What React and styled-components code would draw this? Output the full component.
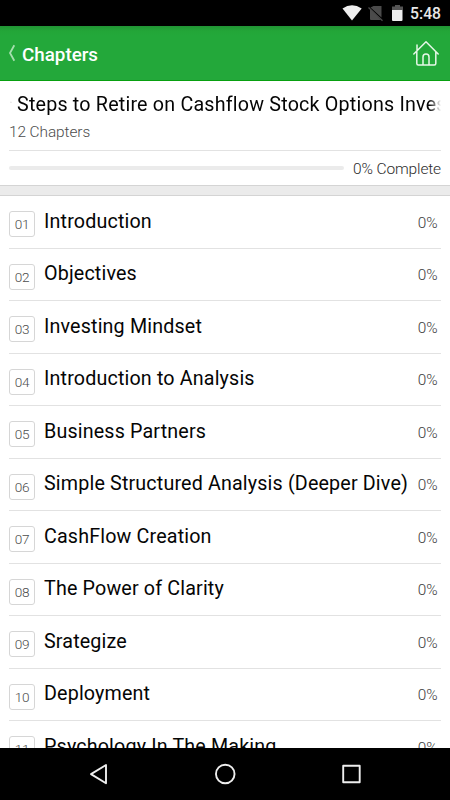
import React from "react";
import styled, { createGlobalStyle } from "styled-components";

const GlobalStyle = createGlobalStyle`
  * { box-sizing: border-box; }
  body { margin: 0; background: #fff; font-family: Roboto, "Liberation Sans", sans-serif; }
`;

const Screen = styled.div`
  width: 450px;
  height: 800px;
  display: flex;
  flex-direction: column;
  overflow: hidden;
  background: #fff;
  color: #050505;
`;

const StatusBar = styled.div`
  flex: none;
  height: 26px;
  display: flex;
  align-items: center;
  justify-content: flex-end;
  padding-right: 9px;
  background: #000;
`;

const StatusIcons = styled.svg`
  width: 66px;
  height: 26px;
  margin-right: 5px;
`;

const Clock = styled.span`
  font-size: 15.7px;
  font-weight: 500;
  line-height: 26px;
  padding-top: 1px;
  color: #e8e8e8;
`;

const Header = styled.header`
  flex: none;
  height: 55px;
  display: flex;
  align-items: center;
  padding: 0 10px 0 8px;
  background: linear-gradient(#219334, #23a638 5px, #23a83a 10px);
  border-bottom: 1px solid #08a010;
`;

const BackIcon = styled.svg`
  width: 8px;
  height: 18px;
  margin-right: 6px;
`;

const HeaderTitle = styled.h1`
  flex: 1;
  margin: 3px 0 0;
  font-size: 18.8px;
  font-weight: 500;
  line-height: 24px;
  color: #fff;
`;

const HomeIcon = styled.svg`
  width: 30px;
  height: 30px;
`;

const Summary = styled.section`
  flex: none;
  height: 104px;
  padding: 0 9px;
`;

const Marquee = styled.div`
  height: 36px;
  padding-top: 12px;
  display: flex;
  overflow: hidden;
  white-space: nowrap;
  font-size: 19.7px;
  line-height: 24px;
  letter-spacing: 0.2px;
  mask-image: linear-gradient(90deg, transparent, #000 9px, #000 420px, transparent);
`;

const MarqueeLead = styled.span`
  flex: none;
  width: 8px;
  font-size: 14px;
  line-height: 20px;
  color: #777;
`;

const ChapterCount = styled.div`
  height: 34px;
  padding-top: 5px;
  font-size: 15.4px;
  font-weight: 300;
  line-height: 20px;
  letter-spacing: -0.07px;
  color: #4c4c4c;
  border-bottom: 1px solid #e2e2e2;
`;

const Progress = styled.div`
  height: 34px;
  display: flex;
  align-items: center;
  gap: 9px;
`;

const Track = styled.div`
  flex: 1;
  height: 4px;
  border-radius: 2px;
  background: #ebebeb;
`;

const ProgressLabel = styled.span`
  font-size: 15.5px;
  font-weight: 300;
  line-height: 20px;
  letter-spacing: -0.14px;
  padding-top: 2px;
  color: #2c2c2c;
`;

const Divider = styled.div`
  flex: none;
  height: 11px;
  background: #ebebeb;
  border-top: 1px solid #d4d4d4;
  border-bottom: 1px solid #d4d4d4;
`;

const ChapterList = styled.ol`
  flex: 1;
  min-height: 0;
  margin: 0;
  padding: 0 9px;
  list-style: none;
  overflow: hidden;
`;

const Chapter = styled.li`
  height: 52.5px;
  display: flex;
  align-items: flex-start;
  border-bottom: 1px solid #e2e2e2;
`;

const Number = styled.span`
  width: 26px;
  height: 26px;
  margin: 15px 9px 0 0;
  border: 1px solid #d6d6d6;
  border-radius: 3px;
  font-size: 13.6px;
  font-weight: 300;
  line-height: 25px;
  letter-spacing: -0.4px;
  text-align: center;
  color: #4c4c4c;
`;

const ChapterTitle = styled.span`
  flex: 1;
  padding-top: 13.6px;
  font-size: 19.7px;
  line-height: 24px;
  letter-spacing: 0.16px;
  white-space: nowrap;
`;

const Percent = styled.span`
  padding: 16.5px 3.5px 0 0;
  font-size: 15.4px;
  font-weight: 300;
  line-height: 20px;
  letter-spacing: -0.1px;
  color: #3c3c3c;
`;

const NavBar = styled.nav`
  flex: none;
  height: 52px;
  display: flex;
  justify-content: center;
  align-items: center;
  background: #000;
`;

const NavIcon = styled.svg`
  width: 126.5px;
  height: 52px;
  fill: none;
  stroke: #eee;
  stroke-width: 1.9;
  stroke-linejoin: round;
`;

const chapters = [
  "Introduction",
  "Objectives",
  "Investing Mindset",
  "Introduction to Analysis",
  "Business Partners",
  "Simple Structured Analysis (Deeper Dive)",
  "CashFlow Creation",
  "The Power of Clarity",
  "Srategize",
  "Deployment",
  "Psychology In The Making",
];

export default function App() {
  return (
    <Screen>
      <GlobalStyle />
      <StatusBar>
        <StatusIcons viewBox="0 0 66 26">
          <path d="M3.5 8.6Q13 1.8 22.7 8.6L13 20.5Z" fill="#eee" />
          <path d="M34.5 6h8v11.5L31.5 7.5ZM31 9 42 20H32q-1 0-1-1Z" fill="#4b4b4b" />
          <path d="M29.5 7.5 43.5 20.8" stroke="#4b4b4b" strokeWidth="1.3" />
          <path d="M56 5h5v1.5h3V10H53V6.5h3Z" fill="#555" />
          <path d="M53 10h10.5v10q0 1-1 1H54q-1 0-1-1Z" fill="#eee" />
        </StatusIcons>
        <Clock>5:48</Clock>
      </StatusBar>
      <Header>
        <BackIcon viewBox="0 0 8 18">
          <path d="M6.3 1.3 2 9l4.3 7.7" fill="none" stroke="#a5dfae" strokeWidth="1.8" />
        </BackIcon>
        <HeaderTitle>Chapters</HeaderTitle>
        <HomeIcon viewBox="0 0 30 30" fill="none" stroke="#e6f7e7" strokeWidth="1.5" strokeLinecap="round" strokeLinejoin="round">
          <path d="M3.8 16 16 3.8 28.2 16M6.8 13.5v12q0 1.5 1.5 1.5h16q1.5 0 1.5-1.5v-12M7 12V7M13 26.5V19q0-3 3-3t3 3v7.5" />
        </HomeIcon>
      </Header>
      <Summary>
        <Marquee>
          <MarqueeLead>·</MarqueeLead>
          <span>Steps to Retire on Cashflow Stock Options Investing</span>
        </Marquee>
        <ChapterCount>12 Chapters</ChapterCount>
        <Progress>
          <Track />
          <ProgressLabel>0% Complete</ProgressLabel>
        </Progress>
      </Summary>
      <Divider />
      <ChapterList>
        {chapters.map((title, i) => (
          <Chapter key={title}>
            <Number>{String(i + 1).padStart(2, "0")}</Number>
            <ChapterTitle>{title}</ChapterTitle>
            <Percent>0%</Percent>
          </Chapter>
        ))}
      </ChapterList>
      <NavBar>
        <NavIcon viewBox="0 0 126.5 52">
          <path d="M71 17v18.2L56 26.1Z" />
        </NavIcon>
        <NavIcon viewBox="0 0 126.5 52">
          <circle cx="63.25" cy="26" r="9.3" />
        </NavIcon>
        <NavIcon viewBox="0 0 126.5 52">
          <rect x="55.2" y="17.8" width="16.5" height="16.5" />
        </NavIcon>
      </NavBar>
    </Screen>
  );
}
